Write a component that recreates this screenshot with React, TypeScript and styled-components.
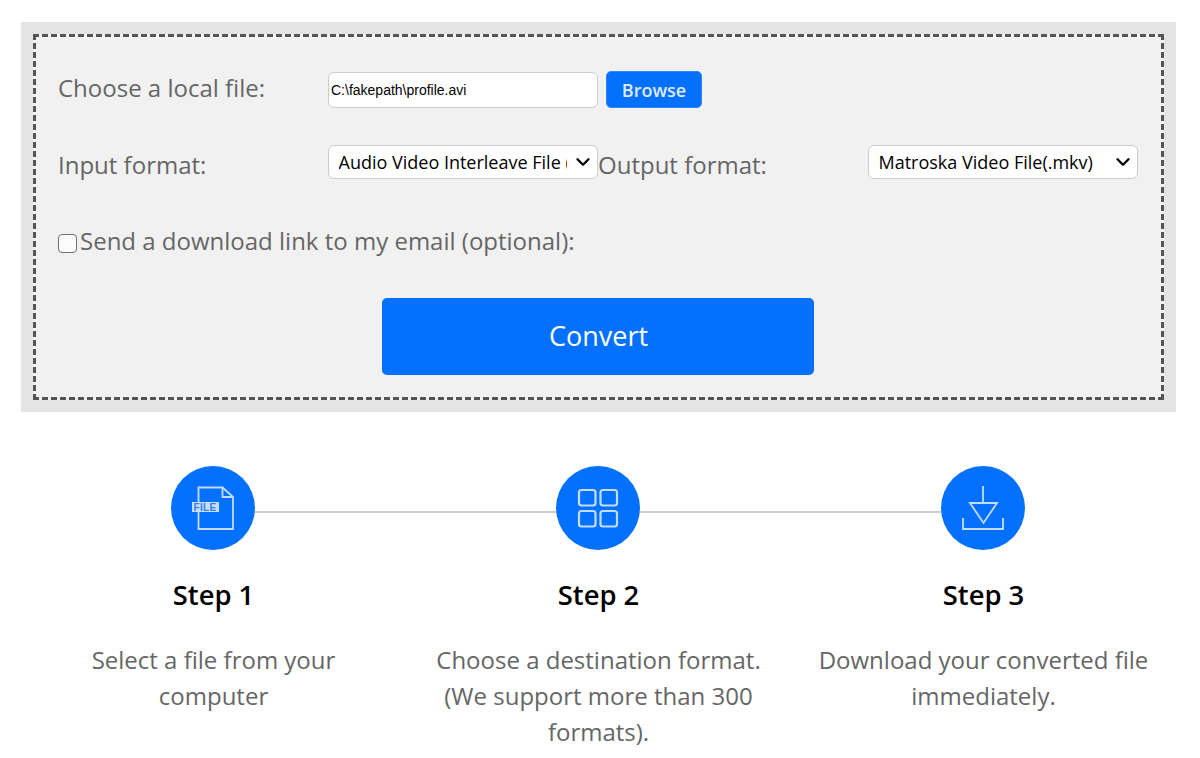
import React from "react";
import styled, { createGlobalStyle } from "styled-components";
import { ChevronDown } from "lucide-react";

const Global = createGlobalStyle`
  html, body { margin: 0; padding: 0; background: #fff; }
  body { font-family: "Open Sans", "Liberation Sans", sans-serif; }
  * { box-sizing: border-box; }
`;

const Page = styled.div`
  width: 1200px;
  height: 758px;
  overflow: hidden;
  padding: 22px 24px 0 21px;
`;

const Outer = styled.section`
  height: 390px;
  padding: 12px;
  background: #e4e4e4;
`;

const Form = styled.form`
  height: 366px;
  border: 3px dashed #555;
  background: #f1f1f1;
  padding: 18px 22px 0;
  display: flex;
  flex-direction: column;
`;

const Row = styled.div`
  height: 76px;
  display: grid;
  grid-template-columns: repeat(4, 270px);
  align-items: start;
  padding-top: 16px;
`;

const Label = styled.label<{ $lift?: number }>`
  font-size: 24px;
  line-height: 36px;
  color: #666;
  display: block;
  white-space: nowrap;
  margin-top: ${(p) => -(p.$lift ?? 0)}px;
`;

const FileCell = styled.div`
  display: flex;
  gap: 8px;
  grid-column: span 2;
  align-items: flex-start;
`;

const PathInput = styled.input`
  width: 270px;
  height: 36px;
  margin-top: 1px;
  border: 1px solid #ccc;
  border-radius: 6px;
  background: #fff;
  color: #000;
  padding: 0 2px;
  font-family: "Liberation Sans", Arial, sans-serif;
  font-size: 14px;
`;

const Browse = styled.button`
  width: 96px;
  height: 37px;
  border: 1px solid #2f86f5;
  border-radius: 5px;
  background: #0371fe;
  color: #dfeafa;
  font-family: "Open Sans", sans-serif;
  font-size: 18px;
  font-weight: 600;
  padding: 0;
`;

const SelectWrap = styled.div`
  position: relative;
  width: 270px;
  height: 34px;
  margin-top: -2px;
  color: #000;
  svg {
    position: absolute;
    right: 4px;
    top: 6px;
    pointer-events: none;
  }
`;

const Select = styled.select`
  appearance: none;
  display: block;
  width: 270px;
  height: 34px;
  border: 1px solid #ccc;
  border-radius: 6px;
  background: #fff;
  color: #000;
  padding: 0 30px 0 9.5px;
  font-family: "Open Sans", sans-serif;
  font-size: 18px;
`;

const CheckRow = styled.div`
  height: 76px;
  padding-top: 16px;
  display: flex;
  align-items: flex-start;
`;

const Check = styled.input`
  appearance: none;
  width: 19px;
  height: 19px;
  margin: 11px 3px 0 0;
  border: 1.5px solid #707070;
  border-radius: 4px;
  background: #fbfbfb;
`;

const ConvertWrap = styled.div`
  display: flex;
  justify-content: center;
  padding: 15px 2px 0 0;
`;

const Convert = styled.button`
  width: 432px;
  height: 77px;
  border: 0;
  border-radius: 5px;
  background: #0371fe;
  color: #fff;
  font-family: "Open Sans", sans-serif;
  font-size: 27px;
  padding: 0 0 2px 2px;
`;

const Steps = styled.div`
  position: relative;
  display: grid;
  grid-template-columns: repeat(3, 385px);
  margin-left: -1px;
  padding-top: 54px;
`;

const Connector = styled.div`
  position: absolute;
  left: 192px;
  width: 770px;
  top: 99px;
  height: 2px;
  background: #ccc;
`;

const Step = styled.div`
  position: relative;
  display: flex;
  flex-direction: column;
  align-items: center;
  text-align: center;
`;

const Circle = styled.div`
  width: 84px;
  height: 84px;
  border-radius: 50%;
  background: #0371fe;
  display: flex;
  align-items: center;
  justify-content: center;
`;

const StepTitle = styled.h3`
  margin: 25px 0 0;
  padding-left: 2px;
  font-size: 27.4px;
  line-height: 40px;
  font-weight: 600;
  color: #000;
`;

const StepText = styled.p`
  margin: 27px 0 0;
  width: 345px;
  padding-left: 2px;
  font-size: 24px;
  line-height: 36px;
  color: #666;
`;

const FileTag = styled.text`
  font-family: "Liberation Sans", Arial, sans-serif;
  font-size: 10px;
  font-weight: 700;
  letter-spacing: 0.3px;
  fill: #2f7fe8;
`;

const Icon = styled.svg`
  display: block;
  fill: none;
  stroke: #c4dcff;
  stroke-width: 1.8;
`;

const FileIcon = () => (
  <Icon width="84" height="84" viewBox="0 0 84 84">
    <path d="M27.5 36V21.5H51.5L62 31V63H27.5V46" />
    <path d="M51.5 21.5V31H62" />
    <rect x="21" y="36" width="27" height="10" fill="#c9deff" stroke="none" />
    <FileTag x="22.5" y="45" stroke="none">FILE</FileTag>
  </Icon>
);

const GridIcon = () => (
  <Icon width="84" height="84" viewBox="0 0 84 84">
    <rect x="23" y="24" width="16.5" height="15.5" rx="2.5" strokeWidth="2.2" />
    <rect x="44.5" y="24" width="16.5" height="15.5" rx="2.5" strokeWidth="2.2" />
    <rect x="23" y="45" width="16.5" height="15.5" rx="2.5" strokeWidth="2.2" />
    <rect x="44.5" y="45" width="16.5" height="15.5" rx="2.5" strokeWidth="2.2" />
  </Icon>
);

const DownloadIcon = () => (
  <Icon width="84" height="84" viewBox="0 0 84 84">
    <path d="M42 20V37" />
    <path d="M29 37H56L42.5 57Z" />
    <path d="M22 52V63H62V52" />
  </Icon>
);

export default function App() {
  return (
    <Page>
      <Global />
      <Outer>
        <Form onSubmit={(e) => e.preventDefault()}>
          <Row>
            <Label $lift={1}>Choose a local file:</Label>
            <FileCell>
              <PathInput type="text" readOnly value="C:\fakepath\profile.avi" />
              <Browse type="button">Browse</Browse>
            </FileCell>
          </Row>
          <Row>
            <Label>Input format:</Label>
            <SelectWrap>
              <Select defaultValue="avi">
                <option value="avi">Audio Video Interleave File (.avi)</option>
              </Select>
              <ChevronDown size={22} strokeWidth={2.6} />
            </SelectWrap>
            <Label>Output format:</Label>
            <SelectWrap>
              <Select defaultValue="mkv">
                <option value="mkv">Matroska Video File(.mkv)</option>
              </Select>
              <ChevronDown size={22} strokeWidth={2.6} />
            </SelectWrap>
          </Row>
          <CheckRow>
            <Check type="checkbox" />
            <Label>Send a download link to my email (optional):</Label>
          </CheckRow>
          <ConvertWrap>
            <Convert type="submit">Convert</Convert>
          </ConvertWrap>
        </Form>
      </Outer>
      <Steps>
        <Connector />
        <Step>
          <Circle><FileIcon /></Circle>
          <StepTitle>Step 1</StepTitle>
          <StepText>Select a file from your computer</StepText>
        </Step>
        <Step>
          <Circle><GridIcon /></Circle>
          <StepTitle>Step 2</StepTitle>
          <StepText>Choose a destination format. (We support more than 300 formats).</StepText>
        </Step>
        <Step>
          <Circle><DownloadIcon /></Circle>
          <StepTitle>Step 3</StepTitle>
          <StepText>Download your converted file immediately.</StepText>
        </Step>
      </Steps>
    </Page>
  );
}
